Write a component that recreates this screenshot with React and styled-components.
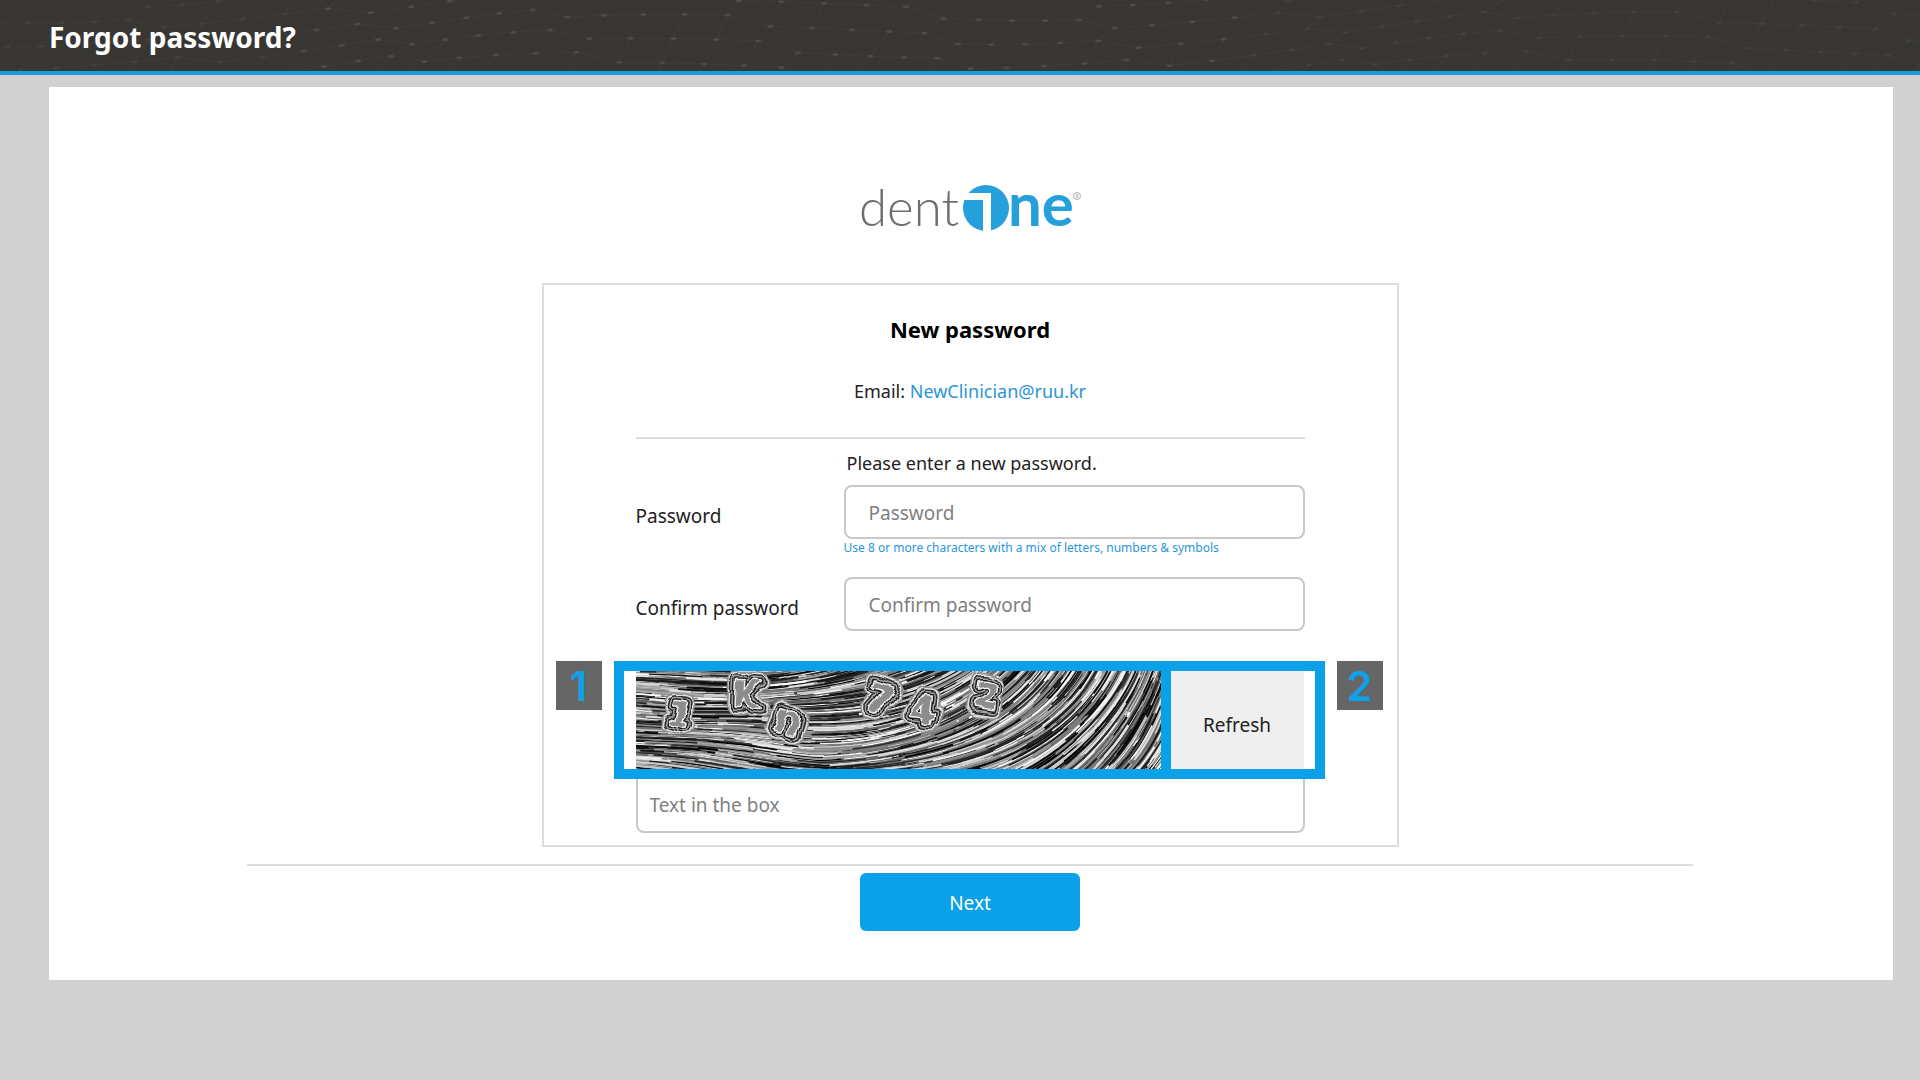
import React from 'react';
import styled, { createGlobalStyle } from 'styled-components';

const GlobalStyle = createGlobalStyle`
    * {
        box-sizing: border-box;
    }

    body {
        margin: 0;
        min-height: 100vh;
        background: #d1d1d1;
        color: #222;
        font-family: "Noto Sans", "Open Sans", sans-serif;
        font-size: 19px;
        line-height: 28px;
    }

    input, button {
        font: inherit;
    }
`;

const Header = styled.header`
    display: grid;
    align-items: center;
    height: 75px;
    overflow: hidden;
    background: #383633;
    border-bottom: 4px solid #1c9cd8;

        & > * {
            grid-area: 1 / 1;
        }

        h1 {
            margin: 0;
            padding: 2px 49px 0;
            color: #fff;
            font-size: 28px;
            line-height: 36px;
        }
`;

const Mesh = styled.svg`
    width: 100%;
    height: 72px;
`;

const Panel = styled.main`
    display: flex;
    flex-direction: column;
    align-items: center;
    margin: 12px 27px 0 49px;
    padding: 78px 26px 49px 24px;
    background: #fff;
`;

const Logo = styled.svg`
    width: 240px;
    height: 84px;
`;

const Card = styled.form`
    display: flex;
    flex-direction: column;
    width: 100%;
    max-width: 857px;
    margin-top: 34px;
    padding-bottom: 12px;
    border: 2px solid #ddd;
`;

const Section = styled.div`
    display: flex;
    flex-direction: column;
    margin: 0 92px;
`;

const Title = styled.h2`
    margin: 28px 0 0;
    text-align: center;
    color: #000;
    font-size: 22px;
    line-height: 32px;
`;

const Email = styled.p`
    margin: 32px 0;
    text-align: center;
    font-size: 18px;

        a {
            color: #2b95da;
            text-decoration: none;
        }
`;

const Rule = styled.hr`
    width: 100%;
    max-width: ${({ $max }) => $max || 'none'};
    margin: 0;
    border: 0;
    border-top: 2px solid #ddd;
`;

const Fields = styled.div`
    display: grid;
    grid-template-columns: 208px 1fr;
    align-items: center;
    padding: 10px 0 30px;

        label {
            padding-top: 8px;
        }
`;

const Note = styled.p`
    grid-column: 2;
    margin: 0 0 8px 3px;
    font-size: 18px;
`;

const Hint = styled.p`
    grid-column: 2;
    margin: 0 0 20px;
    color: #2b95da;
    font-size: 12px;
    line-height: 18px;
`;

const Input = styled.input`
    width: 100%;
    height: 54px;
    padding: 2px 23px 0;
    border: 2px solid #c8c8c8;
    border-radius: 8px;
    background: #fff;
    color: #222;
    outline: none;

        &::placeholder {
            color: #808080;
            opacity: 1;
        }
`;

const CodeInput = styled(Input)`
    padding: 0 12px;
    border-top: 0;
    border-radius: 0 0 8px 8px;
`;

const CaptchaRow = styled.div`
    display: flex;
    align-items: flex-start;
    gap: 12px;
    padding: 0 14px 0 12px;
`;

const Badge = styled.span`
    flex: none;
    width: 46px;
    height: 49px;
    background: #666;
    color: #0ca1e8;
    font-family: Inter, sans-serif;
    font-size: 41px;
    font-weight: 600;
    line-height: 50px;
    text-align: center;
`;

const Frame = styled.div`
    display: flex;
    flex: 1;
    min-width: 0;
    height: 118px;
    padding: 0 11px 0 12px;
    border: 10px solid #0aa1e8;
`;

const CaptchaImage = styled.svg`
    flex: 1;
    min-width: 0;
    height: 98px;
    background: #777;
`;

const Refresh = styled.button`
    width: 143px;
    border: 0;
    border-left: 10px solid #0aa1e8;
    padding: 10px 0 0;
    background: #efefef;
    color: #222;
    cursor: pointer;
`;

const Next = styled.button`
    width: 220px;
    height: 58px;
    margin-top: 7px;
    padding: 2px 0 0;
    border: 0;
    border-radius: 6px;
    background: #0aa1e8;
    color: #fff;
    cursor: pointer;
`;

const Spacer = styled.div`
    height: 17px;
`;

// small seeded generator so the textures are the same on every render
const makeRandom = (seed) => () => {
    seed = (seed * 1664525 + 1013904223) % 4294967296;
    return seed / 4294967296;
};

// direction of the grain in the captcha: flat on the left, climbing to the right
const grainAngle = (x, y) => {
    const t = (x - 140 - (y - 49)) / 370;
    const wave = 3 * Math.sin(x / 38 + y / 17);
    const deg = t > 0 ? -62 * Math.pow(t, 1.3) : 7 * (y / 98);
    return ((deg + wave) * Math.PI) / 180;
};

const makeGrain = () => {
    const random = makeRandom(42);
    const lines = [];
    for (let i = 0; i < 3000; i++) {
        let x = random() * 620 - 80;
        let y = random() * 160 - 10;
        const steps = 8 + Math.floor(random() * 12);
        let d = `M${x.toFixed(1)} ${y.toFixed(1)}`;
        for (let s = 0; s < steps; s++) {
            const a = grainAngle(x, y);
            x += Math.cos(a) * 5;
            y += Math.sin(a) * 5;
            d += `L${x.toFixed(1)} ${y.toFixed(1)}`;
        }
        const r = random();
        const v = r < 0.35 ? random() * 50 : r < 0.68 ? 195 + random() * 60 : 90 + random() * 80;
        lines.push({ d, color: `rgb(${[v, v, v].map(Math.round).join()})`, w: 1 + random() * 1.2 });
    }
    return lines;
};

const grain = makeGrain();

const codeChars = [
    { c: '1', x: 44, y: 54, size: 32, r: 14 },
    { c: 'K', x: 110, y: 36, size: 36, r: 3 },
    { c: 'n', x: 152, y: 62, size: 38, r: 18 },
    { c: '7', x: 244, y: 41, size: 38, r: 16 },
    { c: '4', x: 286, y: 52, size: 38, r: 6 },
    { c: '2', x: 350, y: 37, size: 36, r: 8 },
];

const rings = [
    ['#8c8c8c', 18],
    ['#e0e0e0', 15],
    ['#2a2a2a', 12],
    ['#a4a4a4', 9],
    ['#1c1c1c', 6],
    ['#eee', 3],
];

const meshAt = (i, j) => [
    i * 38 + j * 22 - 60 + 10 * Math.sin(i * 0.5 + j),
    j * 21 - 30 + 16 * Math.sin(i * 0.24 + j * 0.35) - (i % 5) * 2,
];

const makeMesh = () => {
    const dots = [];
    let d = '';
    for (let j = 0; j < 7; j++) {
        for (let i = -2; i < 54; i++) {
            const [x, y] = meshAt(i, j);
            const [rx, ry] = meshAt(i + 1, j);
            const [bx, by] = meshAt(i - 1, j + 1);
            dots.push([x, y, x > 300 && x < 1250 ? 0.09 : 0.03]);
            d += `M${x} ${y}L${rx} ${ry}M${x} ${y}L${bx} ${by}`;
        }
    }
    return { dots, d };
};

const mesh = makeMesh();

function HeaderMesh() {
  return (
    <Mesh viewBox="0 0 1920 72" preserveAspectRatio="xMidYMid slice" aria-hidden="true">
        <path d={mesh.d} fill="none" stroke="#fff" strokeOpacity="0.03" />
        {mesh.dots.map(([x, y, o], i) => (
            <ellipse key={i} cx={x} cy={y} rx="3" ry="1.5" fill="#fff" opacity={o} />
        ))}
    </Mesh>
  )
}

function DentOneLogo() {
  return (
    <Logo viewBox="0 -16 240 84" role="img" aria-label="dentOne">
        <text x="9" y="45" fontFamily="Lato" fontWeight="300" fontSize="51" fill="#6d6e70">dent</text>
        <circle cx="136" cy="27" r="23" fill="#25a0da" />
        <path d="M116 12H141V51H133V19H114Z" fill="#fff" />
        <text x="158" y="45" fontFamily="Lato" fontWeight="700" fontSize="60" fill="#25a0da">ne</text>
        <circle cx="227" cy="15" r="3.5" fill="none" stroke="#aaa" />
        <text x="227" y="17" fontFamily="Lato" fontSize="5" textAnchor="middle" fill="#999">R</text>
    </Logo>
  )
}

function Captcha() {
  return (
    <CaptchaImage viewBox="0 0 524 98" preserveAspectRatio="xMidYMid slice" role="img" aria-label="Captcha">
        <filter id="soft">
            <feGaussianBlur stdDeviation="0.5" />
        </filter>
        <filter id="ripple" x="-10%" y="-20%" width="120%" height="140%">
            <feTurbulence type="fractalNoise" baseFrequency="0.05" numOctaves="2" seed="4" />
            <feDisplacementMap in="SourceGraphic" scale="9" xChannelSelector="R" yChannelSelector="G" />
            <feGaussianBlur stdDeviation="0.5" />
        </filter>
        <g fill="none" filter="url(#soft)">
            {grain.map((line, i) => (
                <path key={i} d={line.d} stroke={line.color} strokeWidth={line.w} />
            ))}
        </g>
        <g fontFamily="DejaVu Sans" fontWeight="700" textAnchor="middle" strokeLinejoin="round" filter="url(#ripple)">
            {codeChars.map(({ c, x, y, size, r }) => (
                <g key={c} fontSize={size} transform={`rotate(${r} ${x} ${y - 14})`}>
                    {rings.map(([color, width]) => (
                        <text key={width} x={x} y={y} fill="#999" stroke={color} strokeWidth={width} aria-hidden="true">{c}</text>
                    ))}
                    <text x={x} y={y} fill="#8c8c8c">{c}</text>
                </g>
            ))}
        </g>
    </CaptchaImage>
  )
}

function App() {
  return (
    <>
        <GlobalStyle />
        <Header>
            <HeaderMesh />
            <h1>Forgot password?</h1>
        </Header>
        <Panel>
            <DentOneLogo />
            <Card id="reset" onSubmit={(e) => e.preventDefault()}>
                <Section>
                    <Title>New password</Title>
                    <Email>Email: <a href="mailto:NewClinician@ruu.kr">NewClinician@ruu.kr</a></Email>
                    <Rule />
                    <Fields>
                        <Note>Please enter a new password.</Note>
                        <label htmlFor="password">Password</label>
                        <Input id="password" type="password" placeholder="Password" />
                        <Hint>Use 8 or more characters with a mix of letters, numbers &amp; symbols</Hint>
                        <label htmlFor="confirm">Confirm password</label>
                        <Input id="confirm" type="password" placeholder="Confirm password" />
                    </Fields>
                </Section>
                <CaptchaRow>
                    <Badge>1</Badge>
                    <Frame>
                        <Captcha />
                        <Refresh type="button">Refresh</Refresh>
                    </Frame>
                    <Badge>2</Badge>
                </CaptchaRow>
                <Section>
                    <CodeInput type="text" aria-label="Text in the box" placeholder="Text in the box" />
                </Section>
            </Card>
            <Spacer />
            <Rule $max="1446px" />
            <Next type="submit" form="reset">Next</Next>
        </Panel>
    </>
  )
}

export default App
